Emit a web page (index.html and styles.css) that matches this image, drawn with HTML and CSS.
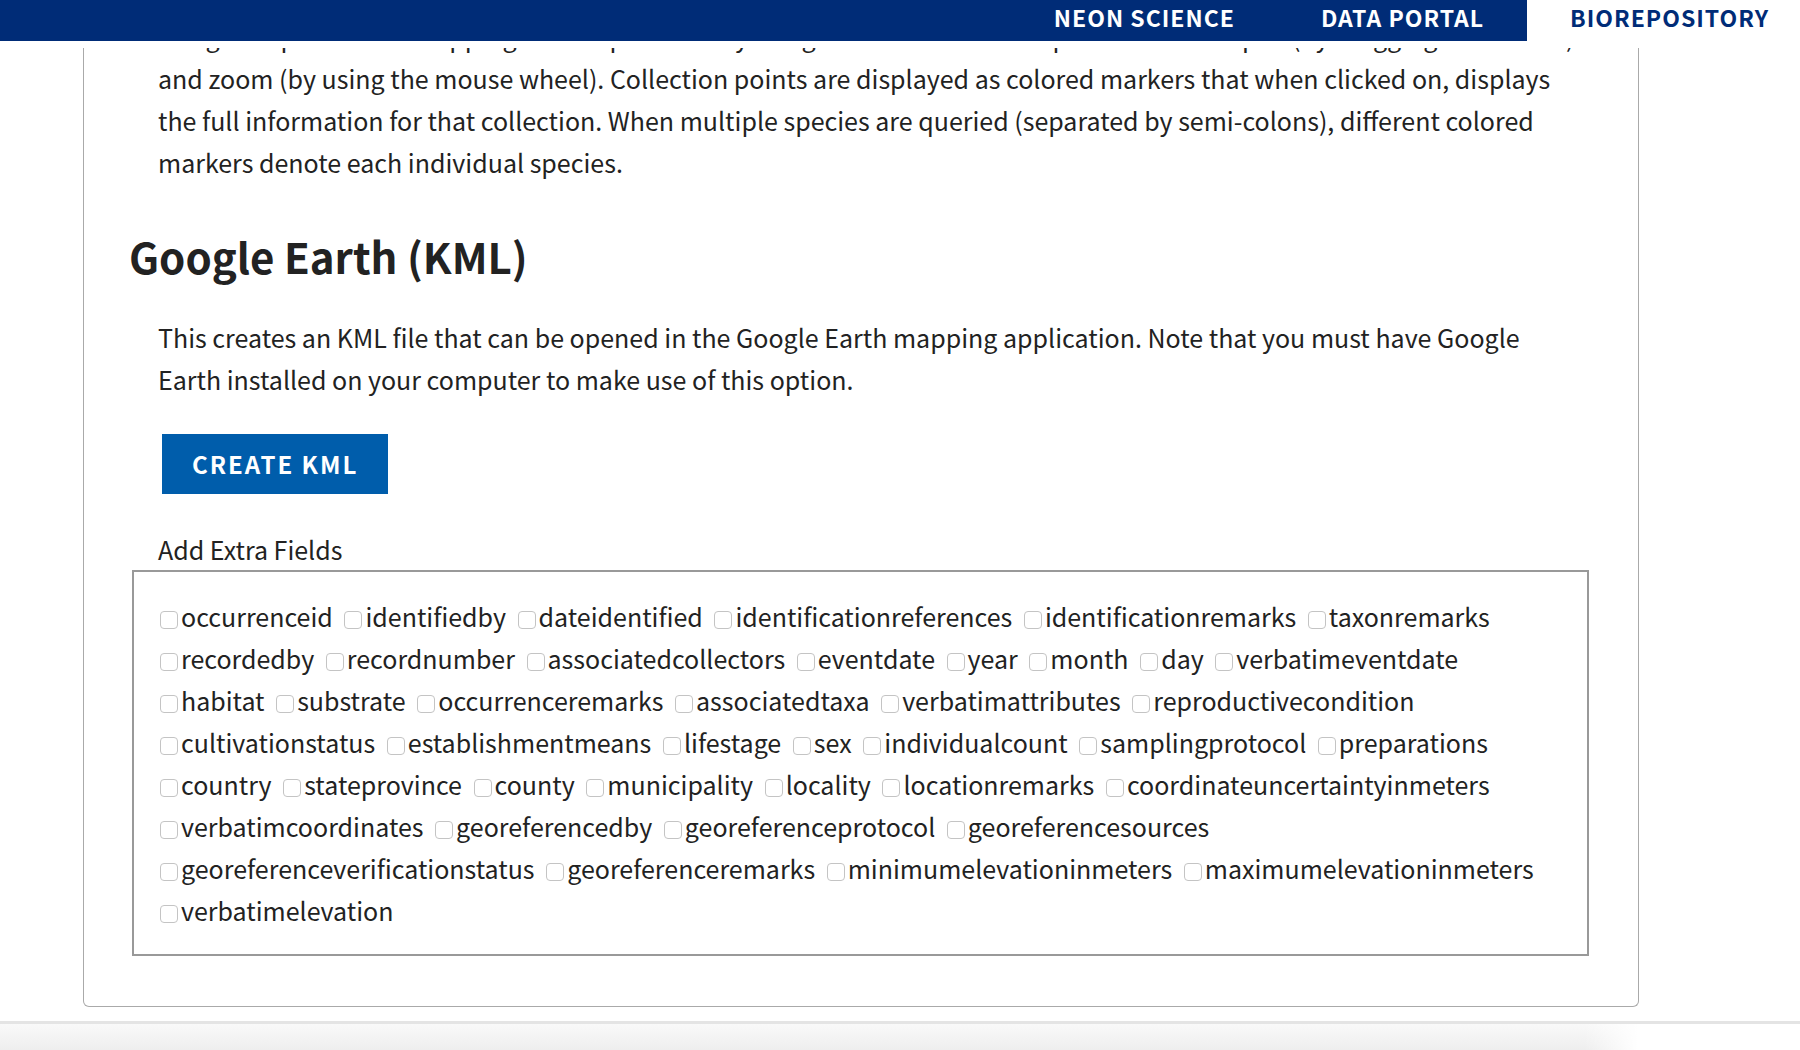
FILE: index.html
```html
<!DOCTYPE html>
<html lang="en">
<head>
<meta charset="utf-8">
<title>Biorepository – Maps</title>
<link rel="stylesheet" href="styles.css">
</head>
<body>
<header class="topbar">
  <nav class="tabs">
    <a class="tab" href="#">NEON SCIENCE</a>
    <a class="tab" href="#">DATA PORTAL</a>
    <a class="tab tab-active" href="#">BIOREPOSITORY</a>
  </nav>
</header>
<main class="viewport">
  <section class="panel">
    <p class="text text-scrolled">Google Maps is a web mapping service provided by Google that features a map that users can pan (by dragging the mouse) and zoom (by using the mouse wheel). Collection points are displayed as colored markers that when clicked on, displays the full information for that collection. When multiple species are queried (separated by semi-colons), different colored markers denote each individual species.</p>
    <h2 class="heading">Google Earth (KML)</h2>
    <p class="text">This creates an KML file that can be opened in the Google Earth mapping application. Note that you must have Google Earth installed on your computer to make use of this option.</p>
    <form class="kml-form">
      <button class="button" type="button">CREATE KML</button>
      <p class="fields-title" id="fields-title">Add Extra Fields</p>
      <fieldset class="fields" aria-labelledby="fields-title">
        <label class="field"><input class="box" type="checkbox">occurrenceid</label>
        <label class="field"><input class="box" type="checkbox">identifiedby</label>
        <label class="field"><input class="box" type="checkbox">dateidentified</label>
        <label class="field"><input class="box" type="checkbox">identificationreferences</label>
        <label class="field"><input class="box" type="checkbox">identificationremarks</label>
        <label class="field"><input class="box" type="checkbox">taxonremarks</label>
        <label class="field"><input class="box" type="checkbox">recordedby</label>
        <label class="field"><input class="box" type="checkbox">recordnumber</label>
        <label class="field"><input class="box" type="checkbox">associatedcollectors</label>
        <label class="field"><input class="box" type="checkbox">eventdate</label>
        <label class="field"><input class="box" type="checkbox">year</label>
        <label class="field"><input class="box" type="checkbox">month</label>
        <label class="field"><input class="box" type="checkbox">day</label>
        <label class="field"><input class="box" type="checkbox">verbatimeventdate</label>
        <label class="field"><input class="box" type="checkbox">habitat</label>
        <label class="field"><input class="box" type="checkbox">substrate</label>
        <label class="field"><input class="box" type="checkbox">occurrenceremarks</label>
        <label class="field"><input class="box" type="checkbox">associatedtaxa</label>
        <label class="field"><input class="box" type="checkbox">verbatimattributes</label>
        <label class="field"><input class="box" type="checkbox">reproductivecondition</label>
        <label class="field"><input class="box" type="checkbox">cultivationstatus</label>
        <label class="field"><input class="box" type="checkbox">establishmentmeans</label>
        <label class="field"><input class="box" type="checkbox">lifestage</label>
        <label class="field"><input class="box" type="checkbox">sex</label>
        <label class="field"><input class="box" type="checkbox">individualcount</label>
        <label class="field"><input class="box" type="checkbox">samplingprotocol</label>
        <label class="field"><input class="box" type="checkbox">preparations</label>
        <label class="field"><input class="box" type="checkbox">country</label>
        <label class="field"><input class="box" type="checkbox">stateprovince</label>
        <label class="field"><input class="box" type="checkbox">county</label>
        <label class="field"><input class="box" type="checkbox">municipality</label>
        <label class="field"><input class="box" type="checkbox">locality</label>
        <label class="field"><input class="box" type="checkbox">locationremarks</label>
        <label class="field"><input class="box" type="checkbox">coordinateuncertaintyinmeters</label>
        <label class="field"><input class="box" type="checkbox">verbatimcoordinates</label>
        <label class="field"><input class="box" type="checkbox">georeferencedby</label>
        <label class="field"><input class="box" type="checkbox">georeferenceprotocol</label>
        <label class="field"><input class="box" type="checkbox">georeferencesources</label>
        <label class="field"><input class="box" type="checkbox">georeferenceverificationstatus</label>
        <label class="field"><input class="box" type="checkbox">georeferenceremarks</label>
        <label class="field"><input class="box" type="checkbox">minimumelevationinmeters</label>
        <label class="field"><input class="box" type="checkbox">maximumelevationinmeters</label>
        <label class="field"><input class="box" type="checkbox">verbatimelevation</label>
      </fieldset>
    </form>
  </section>
</main>
<footer class="footer"></footer>
</body>
</html>
```
FILE: styles.css
```css
* {
  box-sizing: border-box;
}

body {
  margin: 0;
  min-height: 100vh;
  display: flex;
  flex-direction: column;
  background: #fff;
  color: #222;
  font-family: "Noto Sans CJK SC", "Noto Sans", sans-serif;
  font-size: 25px;
  line-height: 42px;
}

.topbar {
  display: flex;
  justify-content: flex-end;
  background: #002c77;
}

.tabs {
  display: flex;
}

.tab {
  height: 41px;
  padding: 0 43px;
  color: #fff;
  font-size: 23px;
  font-weight: 700;
  line-height: 34px;
  letter-spacing: 1px;
  text-decoration: none;
}

.tab-active {
  padding-right: 31px;
  background: #fff;
  color: #002c77;
}

.viewport {
  margin-top: 7px;
  padding: 0 161px 0 83px;
  overflow: hidden;
}

.panel {
  padding: 0 49px 50px 48px;
  border: 1px solid #aaa;
  border-top: 0;
  border-radius: 0 0 6px 6px;
}

.text {
  margin: 0;
  padding: 0 7px 0 26px;
}

.text-scrolled {
  margin-top: -33px;
}

.heading {
  margin: 41px -3px 28px;
  font-size: 42px;
  font-weight: 700;
  line-height: 64px;
}

.kml-form {
  margin: 0;
}

.button {
  display: block;
  height: 60px;
  margin: 34px 30px;
  padding: 0 30px;
  border: 0;
  background: #005dab;
  color: #fff;
  font: inherit;
  font-size: 24px;
  font-weight: 700;
  letter-spacing: 2px;
}

.fields-title {
  margin: 0;
  padding-left: 26px;
}

.fields {
  margin: 0;
  padding: 23px 22px 23px 26px;
  border: 2px solid #999;
}

.field {
  margin-right: 6px;
  white-space: nowrap;
}

.box {
  appearance: none;
  width: 18px;
  height: 18px;
  margin: 0 3px 0 0;
  border: 1px solid #c4c4c4;
  border-radius: 4px;
  background: #fff;
  vertical-align: -2px;
}

.footer {
  flex: 1;
  margin-top: 14px;
  border-top: 3px solid #e4e4e4;
  background: linear-gradient(90deg, transparent 88%, #fff 91%), linear-gradient(#f9f9f9, #eee);
}
```
